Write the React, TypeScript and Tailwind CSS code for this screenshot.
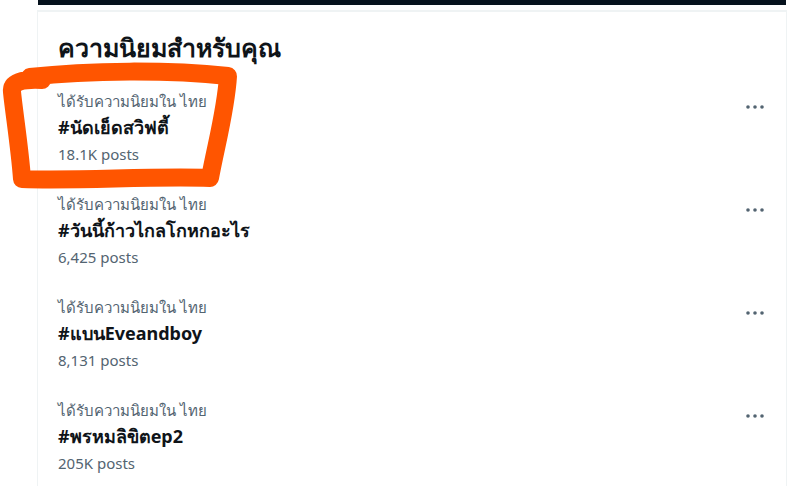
const trends = [
  { tag: "#นัดเย็ดสวิฟตี้", posts: "18.1K posts" },
  { tag: "#วันนี้ก้าวไกลโกหกอะไร", posts: "6,425 posts" },
  { tag: "#แบนEveandboy", posts: "8,131 posts" },
  { tag: "#พรหมลิขิตep2", posts: "205K posts" },
];

function Dots() {
  return (
    <svg width="18" height="4" viewBox="0 0 18 4" className="mt-[15px]">
      <circle cx="2" cy="2" r="1.8" fill="#536471" />
      <circle cx="9" cy="2" r="1.8" fill="#536471" />
      <circle cx="16" cy="2" r="1.8" fill="#536471" />
    </svg>
  );
}

function TrendRow({ tag, posts }: { tag: string; posts: string }) {
  return (
    <div className="flex justify-between pl-[20px] pr-[22px] h-[103px]">
      <div className="flex flex-col">
        <span className="text-[15px] leading-[22px] text-[#536471]">ได้รับความนิยมใน ไทย</span>
        <span className="text-[18px] leading-[30px] font-bold text-[#0f1419]">{tag}</span>
        <span className="text-[15px] leading-[24px] text-[#536471]">{posts}</span>
      </div>
      <Dots />
    </div>
  );
}

export default function App() {
  return (
    <div
      className="relative w-[795px] h-[486px] bg-white overflow-hidden"
      style={{ fontFamily: '"Segoe UI", "Noto Sans", "Liberation Sans", sans-serif' }}
    >
      <div className="ml-[38px] w-[748px] h-[5px] bg-[#06121d]" />
      <div className="ml-[37px] w-[750px] h-[481px] border-x border-[#eff3f4]">
        <div className="mt-[5px] h-[2px] bg-[#eff3f4]" />
        <h2 className="pl-[20px] pt-[18px] h-[78px] text-[25px] leading-[34px] font-bold text-[#0f1419]">
          ความนิยมสำหรับคุณ
        </h2>
        {trends.map((t) => (
          <TrendRow key={t.tag} tag={t.tag} posts={t.posts} />
        ))}
      </div>

      {/* hand-drawn annotation */}
      <svg className="absolute left-0 top-0 pointer-events-none" width="260" height="200" viewBox="0 0 260 200">
        <path
          d="M30 77 C 90 70, 170 70, 228 76 C 226 110, 216 145, 210 178 C 150 176, 80 181, 22 179 C 20 150, 14 112, 12 92 C 11 82, 22 79, 42 80"
          fill="none"
          stroke="#ff5500"
          strokeWidth="18"
          strokeLinecap="round"
          strokeLinejoin="round"
        />
      </svg>
    </div>
  );
}
